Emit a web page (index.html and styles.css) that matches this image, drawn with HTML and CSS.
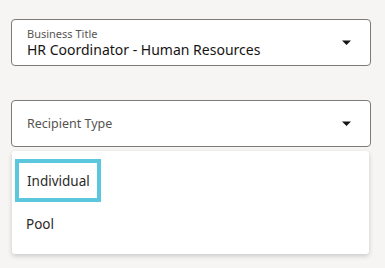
FILE: index.html
```html
<!DOCTYPE html>
<html>
<head>
<meta charset="utf-8">
<link rel="stylesheet" href="styles.css">
</head>
<body>
<div class="page">
  <div class="field">
    <div class="text">
      <div class="label">Business Title</div>
      <div class="value">HR Coordinator - Human Resources</div>
    </div>
    <svg class="caret" width="9" height="6" viewBox="0 0 9 6"><path d="M0 0.5h9L4.5 5z" fill="#161513"/></svg>
  </div>
  <div class="field field2">
    <div class="text">
      <div class="placeholder">Recipient Type</div>
    </div>
    <svg class="caret" width="9" height="6" viewBox="0 0 9 6"><path d="M0 0.5h9L4.5 5z" fill="#161513"/></svg>
  </div>
  <div class="menu">
    <div class="option focused">Individual</div>
    <div class="option">Pool</div>
  </div>
</div>
</body>
</html>
```
FILE: styles.css
```css
html, body { margin: 0; padding: 0; }
body {
  background: #f6f5f3;
  font-family: "Noto Sans", "Open Sans", sans-serif;
  color: #161513;
  width: 385px;
  height: 268px;
  overflow: hidden;
}
.page {
  padding: 19px 14px 0 11px;
  display: flex;
  flex-direction: column;
}
.field {
  height: 45px;
  border: 1px solid #7b7a77;
  border-radius: 4px;
  background: #fff;
  display: flex;
  align-items: center;
  padding: 0 19px 0 15px;
}
.field2 { margin-top: 34px; }
.text { flex: 1; }
.label {
  font-size: 11px;
  line-height: 14px;
  color: #585654;
}
.value {
  font-size: 14px;
  line-height: 17px;
  color: #161513;
}
.placeholder {
  font-size: 12.5px;
  color: #56544f;
}
.caret { display: block; }
.menu {
  margin: 4px 2px 0 1px;
  height: 103px;
  background: #fff;
  border-radius: 3px;
  box-shadow: 0 2px 5px rgba(0,0,0,0.18);
  padding-top: 8px;
  box-sizing: border-box;
}
.option {
  font-size: 13.5px;
  height: 43px;
  display: flex;
  align-items: center;
  padding-left: 14px;
  color: #2b2a28;
}
.option.focused {
  margin-left: 3px;
  padding-left: 8px;
  width: 86px;
  box-sizing: border-box;
  border: 4px solid #5bc6dc;
}
```
